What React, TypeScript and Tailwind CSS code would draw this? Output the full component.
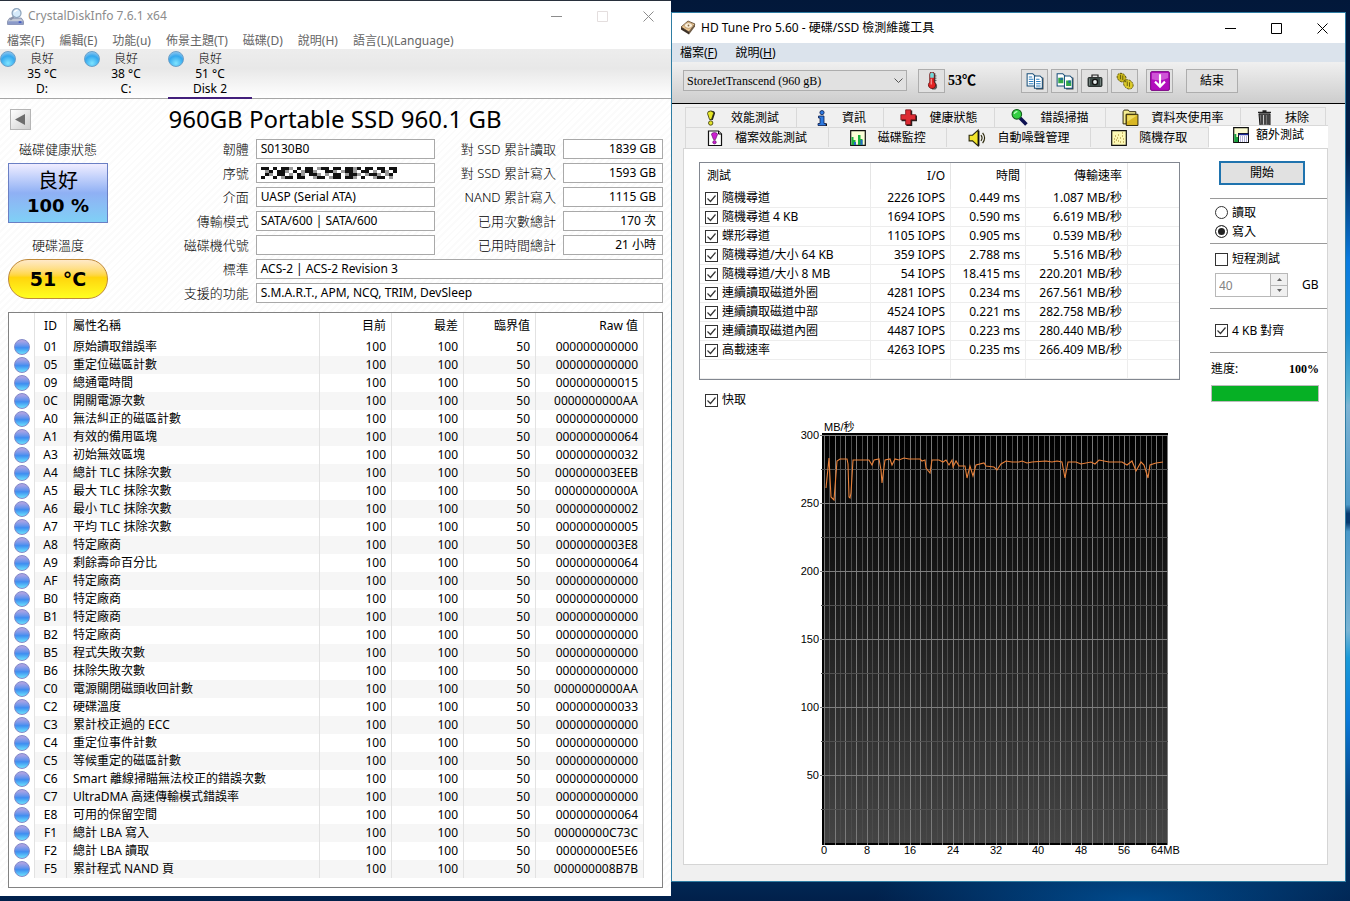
import { useState } from "react";
import type { ReactNode } from "react";

type Attribute = [id: string, name: string, limit: number, raw: string];
type TestRow = { name: string; io: string; time: string; rate: string };

const attributes: Attribute[] = [
  ["01", "原始讀取錯誤率", 50, "000000000000"],
  ["05", "重定位磁區計數", 50, "000000000000"],
  ["09", "總通電時間", 50, "000000000015"],
  ["0C", "開關電源次數", 50, "0000000000AA"],
  ["A0", "無法糾正的磁區計數", 50, "000000000000"],
  ["A1", "有效的備用區塊", 50, "000000000064"],
  ["A3", "初始無效區塊", 50, "000000000032"],
  ["A4", "總計 TLC 抹除次數", 50, "000000003EEB"],
  ["A5", "最大 TLC 抹除次數", 50, "00000000000A"],
  ["A6", "最小 TLC 抹除次數", 50, "000000000002"],
  ["A7", "平均 TLC 抹除次數", 50, "000000000005"],
  ["A8", "特定廠商", 50, "0000000003E8"],
  ["A9", "剩餘壽命百分比", 50, "000000000064"],
  ["AF", "特定廠商", 50, "000000000000"],
  ["B0", "特定廠商", 50, "000000000000"],
  ["B1", "特定廠商", 50, "000000000000"],
  ["B2", "特定廠商", 50, "000000000000"],
  ["B5", "程式失敗次數", 50, "000000000000"],
  ["B6", "抹除失敗次數", 50, "000000000000"],
  ["C0", "電源關閉磁頭收回計數", 50, "0000000000AA"],
  ["C2", "硬碟溫度", 50, "000000000033"],
  ["C3", "累計校正過的 ECC", 50, "000000000000"],
  ["C4", "重定位事件計數", 50, "000000000000"],
  ["C5", "等候重定的磁區計數", 50, "000000000000"],
  ["C6", "Smart 離線掃瞄無法校正的錯誤次數", 50, "000000000000"],
  ["C7", "UltraDMA 高速傳輸模式錯誤率", 50, "000000000000"],
  ["E8", "可用的保留空間", 50, "000000000064"],
  ["F1", "總計 LBA 寫入", 50, "00000000C73C"],
  ["F2", "總計 LBA 讀取", 50, "00000000E5E6"],
  ["F5", "累計程式 NAND 頁", 50, "000000008B7B"],
];

const tests: TestRow[] = [
  { name: "隨機尋道", io: "2226 IOPS", time: "0.449 ms", rate: "1.087 MB/秒" },
  { name: "隨機尋道 4 KB", io: "1694 IOPS", time: "0.590 ms", rate: "6.619 MB/秒" },
  { name: "蝶形尋道", io: "1105 IOPS", time: "0.905 ms", rate: "0.539 MB/秒" },
  { name: "隨機尋道/大小 64 KB", io: "359 IOPS", time: "2.788 ms", rate: "5.516 MB/秒" },
  { name: "隨機尋道/大小 8 MB", io: "54 IOPS", time: "18.415 ms", rate: "220.201 MB/秒" },
  { name: "連續讀取磁道外圈", io: "4281 IOPS", time: "0.234 ms", rate: "267.561 MB/秒" },
  { name: "連續讀取磁道中部", io: "4524 IOPS", time: "0.221 ms", rate: "282.758 MB/秒" },
  { name: "連續讀取磁道內圈", io: "4487 IOPS", time: "0.223 ms", rate: "280.440 MB/秒" },
  { name: "高載速率", io: "4263 IOPS", time: "0.235 ms", rate: "266.409 MB/秒" },
];

const disks = [
  { temp: "35 °C", name: "D:" },
  { temp: "38 °C", name: "C:" },
  { temp: "51 °C", name: "Disk 2" },
];

const infoMenus = ["檔案(F)", "編輯(E)", "功能(u)", "佈景主題(T)", "磁碟(D)", "說明(H)", "語言(L)(Language)"];

/* ---------- icons ---------- */

function Icon({ children, size = 16 }: { children: ReactNode; size?: number }) {
  return (
    <svg width={size} height={size} viewBox="0 0 16 16" className="shrink-0" aria-hidden="true">
      {children}
    </svg>
  );
}

const DiskInfoIcon = () => (
  <Icon size={17}>
    <path d="M2.500 9.500h11l2 3v3H.5v-3z" fill="#c3c9d6" stroke="#7d88a8" strokeWidth=".8" />
    <path d="M1 12.500h14v3H1z" fill="#8b9ac8" />
    <rect x="11" y="12.500" width="2.500" height="1.500" fill="#3b53c0" />
    <path d="M6.500 8 3 11" stroke="#8a93a8" strokeWidth="2" />
    <circle cx="9" cy="4.800" r="4.200" fill="#d5eafa" stroke="#8fa5bd" strokeWidth="1.200" />
    <path d="M7 4a3 3 0 0 1 3-2" stroke="#fff" strokeWidth="1.200" fill="none" />
  </Icon>
);

const DriveIcon = () => (
  <Icon>
    <path d="M1 7 8 1l7 3-6 8z" fill="#e9c48f" stroke="#54402a" strokeWidth=".8" />
    <path d="M1 7v2.500l8 5V12z" fill="#3c3026" />
    <path d="M9 12v2.500L15 6.500V4z" fill="#6d5a44" />
    <ellipse cx="8.500" cy="5.500" rx="4" ry="2.800" fill="#fbf0da" stroke="#a58053" strokeWidth=".6" />
    <circle cx="8.500" cy="5.500" r=".9" fill="#8a6b44" />
  </Icon>
);

const ThermometerIcon = () => (
  <Icon size={18}>
    <path d="M8 1h3v8l1.500 2.500V14L11 15.500H8z" fill="#222" opacity=".7" />
    <path d="M6 2a2 2 0 0 1 4 0v7a3.200 3.200 0 1 1-4 0z" fill="#e22424" stroke="#5a0d0d" strokeWidth=".7" />
    <path d="M6.400 2a1.600 1.600 0 0 1 3.200 0v3H6.400z" fill="#6fdada" />
    <path d="M7.300 6v5" stroke="#ffb0b0" strokeWidth=".9" />
    <path d="M10 3.500h2M10 5.500h2M10 7.500h2" stroke="#333" strokeWidth=".6" />
  </Icon>
);

const CopyIcon = ({ chart = false }: { chart?: boolean }) => (
  <Icon size={18}>
    <path d="M9 5h6.500v10.500H9z" fill="#333" />
    <path d="M1 1.500h5l2 2v9H1z" fill="#fff" stroke="#174e78" strokeWidth=".9" />
    <path d="M7.500 3.500h5l2 2v9h-7z" fill="#fff" stroke="#174e78" strokeWidth=".9" />
    {chart ? (
      <>
        <path d="M2 5h4.500v5H2zM9 7.500h4.500v5H9z" fill="#31a847" />
        <path d="M4 5h2v2H4zM11 7.500h2v2h-2z" fill="#2265aa" />
      </>
    ) : (
      <path d="M2.500 4.500h3M2.500 6.500h4M2.500 8.500h4M2.500 10.500h4M9 6.500h3M9 8.500h4M9 10.500h4M9 12.500h4" stroke="#2b7fc0" strokeWidth=".9" />
    )}
  </Icon>
);

const CameraIcon = () => (
  <Icon size={16}>
    <path d="M5 4V2h6v2" stroke="#222" strokeWidth="1.200" fill="none" />
    <rect x="1" y="4.500" width="14" height="9" rx="1" fill="#3c4a47" stroke="#151a19" strokeWidth=".8" />
    <path d="M2.500 5.500v7M13.500 5.500v7" stroke="#74827e" />
    <circle cx="8" cy="9" r="3.200" fill="#111" />
    <circle cx="8" cy="9" r="1.900" fill="#e8efef" />
  </Icon>
);

const CoinsIcon = () => (
  <Icon size={18}>
    <ellipse cx="5" cy="5" rx="4.300" ry="3.500" transform="rotate(40 5 5)" fill="#c9b71c" stroke="#5b5208" strokeWidth=".8" strokeDasharray="2 .8" />
    <ellipse cx="11" cy="11" rx="4.600" ry="3.700" transform="rotate(40 11 11)" fill="#dccb2c" stroke="#5b5208" strokeWidth=".8" strokeDasharray="2 .8" />
    <path d="M4 2.500v4M6 3v4M10 8.500v4M12 9v4M7 7l2 2" stroke="#6e640b" strokeWidth=".9" />
  </Icon>
);

const DownloadIcon = () => (
  <Icon size={20}>
    <rect x=".5" y=".5" width="15" height="15" rx="1" fill="#b20dbd" stroke="#7a0683" strokeWidth=".8" />
    <path d="M1.500 1.500h13v4q-6 3-13 1z" fill="#cf55d6" />
    <path d="M8 2.500V12M4 8.500l4 4 4-4" stroke="#fff" strokeWidth="1.700" fill="none" />
  </Icon>
);

const ExclaimIcon = () => (
  <Icon>
    <path d="M5 3.500Q5 .8 8.500.8T12 3.500L9.800 10H7.200z" fill="#222" />
    <path d="M4.500 3.500Q4.500 1 7.500 1t3 2.500L8.500 9.500h-2z" fill="#e5e529" stroke="#33330a" strokeWidth=".8" />
    <circle cx="7.700" cy="13" r="2.200" fill="#e5e529" stroke="#33330a" strokeWidth=".8" />
  </Icon>
);

const InfoIcon = () => (
  <Icon>
    <circle cx="8" cy="2.600" r="2.100" fill="#2d7ae0" stroke="#0b1c4d" strokeWidth=".8" />
    <path d="M4.500 6h5.500v7.500h2V15.500h-8V13.500h2V8H4.500z" fill="#2d7ae0" stroke="#0b1c4d" strokeWidth=".8" />
    <path d="M12.500 13.500v2.500" stroke="#111" />
  </Icon>
);

const CrossIcon = () => (
  <Icon size={17}>
    <path d="M6 1.500h5.500V6H16v5.500h-4.500V16H6v-4.500H1.500V6H6z" fill="#222" />
    <path d="M5.300.8h4.900v4.500h4.500v4.900h-4.500v4.500H5.300v-4.500H.8V5.300h4.500z" fill="#dd2b33" stroke="#6d0e12" strokeWidth=".7" />
  </Icon>
);

const SearchIcon = () => (
  <Icon size={17}>
    <path d="m8.500 8.500 6 6" stroke="#0d1152" strokeWidth="3.400" />
    <circle cx="5.500" cy="5" r="4.500" fill="#34cf42" stroke="#115c1a" strokeWidth="1" />
    <path d="M3 4.500a3 3 0 0 1 3-2" stroke="#c9ffce" strokeWidth="1.200" fill="none" />
  </Icon>
);

const FolderIcon = () => (
  <Icon size={17}>
    <path d="M1 2.500 2 1h4l1 1.500h6V5H4v9H1z" fill="#f4ec8f" stroke="#2a2408" strokeWidth=".9" />
    <path d="M4 5h11v10.500H4z" fill="#d9b724" stroke="#2a2408" strokeWidth=".9" />
    <path d="M5 6h9l-9 6z" fill="#eedb64" />
  </Icon>
);

const TrashIcon = () => (
  <Icon>
    <path d="M1 2.500h13M5.500 1h4" stroke="#222" strokeWidth="1.500" />
    <path d="M2 4h11v11.500H3z" fill="#777" stroke="#111" />
    <path d="M5 5v9.500M8 5v9.500M11 5v9.500" stroke="#1d1d1d" strokeWidth="1.100" />
    <path d="M6.500 5v9.500" stroke="#ddd" strokeWidth=".8" />
  </Icon>
);

const FileTestIcon = () => (
  <Icon>
    <path d="M1.500 1h10l3 3v11.500h-13z" fill="#fff" stroke="#111" strokeWidth="1.200" />
    <path d="M11.500 1v3h3" fill="#bbb" stroke="#111" />
    <path d="M4.500 4.500Q4.500 2.500 7.500 2.500t3 2L8.500 9.500h-2z" fill="#cb1fd0" stroke="#51085a" strokeWidth=".6" />
    <circle cx="7.500" cy="12.200" r="1.700" fill="#cb1fd0" stroke="#51085a" strokeWidth=".6" />
  </Icon>
);

const MonitorIcon = () => (
  <Icon>
    <path d="M.7.700h14.600v14.600H.7z" fill="#fbffd8" stroke="#111" strokeWidth="1.200" />
    <path d="M1.500 15V7h2v3h2v5zM8 15V5h2.500v4h2v6z" fill="#18b03d" />
    <path d="M4 15v-3h2v3zM10.500 15v-5h2v5z" fill="#2868c8" />
  </Icon>
);

const SpeakerIcon = () => (
  <Icon size={18}>
    <path d="M1 5.500h3L9 1v14l-5-4.500H1z" fill="#f1e42a" stroke="#2b280a" strokeWidth="1" />
    <path d="M9.500 1.500v13.500" stroke="#111" strokeWidth="1.300" />
    <path d="M11.500 5.500q2 2.500 0 5M13 3.500q3.500 4.500 0 9" stroke="#2b280a" fill="none" />
  </Icon>
);

const ScatterIcon = () => (
  <Icon>
    <path d="M.7.700h14.600v14.600H.7z" fill="#fdf9b4" stroke="#111" strokeWidth="1.200" />
    <path d="M3 12h1M5 10h1M7 11h1M9 8h1M11 6h1M12 9h1M4 6h1M7 5h1M9 12h1M12 12h1M6 8h1M11 3h1M3 9h1" stroke="#9c7a26" strokeWidth="1.100" />
  </Icon>
);

const ExtraIcon = () => (
  <Icon>
    <path d="M.7.700h14.600v14.600H.7z" fill="#fbfbd0" stroke="#111" strokeWidth="1.200" />
    <path d="M1.300 15V7h2v3h2v5z" fill="#18a03d" />
    <rect x="5.500" y="6.500" width="10" height="9" fill="#fff" stroke="#111" />
    <path d="M5.500 7.500h10" stroke="#1c2b9a" strokeWidth="1.500" />
    <path d="M7 10h7M7 12h7M7 14h7" stroke="#6464b4" strokeWidth="1" strokeDasharray="1 1" />
  </Icon>
);

/* ---------- shared bits ---------- */

function WindowButtons({ tone, boxTone }: { tone: string; boxTone: string }) {
  return (
    <div className="ml-auto flex">
      <button aria-label="最小化" className={`grid h-[30px] w-[46px] place-items-center ${tone}`}>
        <svg width="11" height="11" fill="none" stroke="currentColor"><path d="M0 5.500h11" /></svg>
      </button>
      <button aria-label="最大化" className={`grid h-[30px] w-[46px] place-items-center ${boxTone}`}>
        <svg width="11" height="11" fill="none" stroke="currentColor"><path d="M.5.500h10v10H.5z" /></svg>
      </button>
      <button aria-label="關閉" className={`grid h-[30px] w-[46px] place-items-center ${tone}`}>
        <svg width="11" height="11" fill="none" stroke="currentColor"><path d="m.5.500 10 10M10.500.500l-10 10" /></svg>
      </button>
    </div>
  );
}

function Check({ label, on = false }: { label: string; on?: boolean }) {
  const [checked, setChecked] = useState(on);
  return (
    <label className="flex items-center gap-1">
      <span className="grid">
        <input
          type="checkbox"
          checked={checked}
          onChange={(e) => setChecked(e.target.checked)}
          className="h-[13px] w-[13px] appearance-none border border-[#333] bg-white [grid-area:1/1]"
        />
        {checked && (
          <svg width="13" height="13" className="pointer-events-none [grid-area:1/1]" fill="none" stroke="#333" strokeWidth="1.200">
            <path d="m2.500 6.500 3 3 5-6" />
          </svg>
        )}
      </span>
      {label}
    </label>
  );
}

/* ---------- CrystalDiskInfo ---------- */

// Unreadable serial number, one digit per grey block
const serialBlocks = [
  "9909099509099059909909959099099099",
  "0590995090599500995059950990509509",
  "0950990509509950509905995059950590",
  "9009059909900599059909950900599050",
];
const greys = ["#ffffff", "#9a9a9a", "#111111"];

function SerialMosaic() {
  return (
    <svg width="136" height="12" role="img" aria-label="序號已遮蔽" shapeRendering="crispEdges">
      {serialBlocks.map((line, y) =>
        line.split("").map((c, x) => (
          <rect key={`${x}-${y}`} x={x * 4} y={y * 3} width="4" height="3" fill={greys[c === "9" ? 2 : c === "5" ? 1 : 0]} />
        ))
      )}
    </svg>
  );
}

function FieldLabel({ children }: { children: ReactNode }) {
  return <span className="pr-[7px] text-right text-[13px] leading-5 font-light whitespace-nowrap">{children}</span>;
}

function Field({ children, wide = false, right = false }: { children?: ReactNode; wide?: boolean; right?: boolean }) {
  return (
    <span
      className={`flex h-5 items-center border border-[#a9a9a9] bg-white text-xs ${right ? "justify-end pr-[6px]" : "pl-1"} ${wide ? "col-span-3" : ""}`}
    >
      {children}
    </span>
  );
}

function DiskInfoWindow() {
  const [disk, setDisk] = useState(2);
  return (
    <section className="min-w-0 flex-[672] border-t border-[#28303c] bg-white pb-2 font-['Noto_Sans','Noto_Sans_CJK_TC',sans-serif] text-xs text-black">
      <header className="flex h-[30px] items-center pl-[7px] text-[#8c8c8c]">
        <DiskInfoIcon />
        <h1 className="ml-1">CrystalDiskInfo 7.6.1 x64</h1>
        <WindowButtons tone="text-[#8c8c8c]" boxTone="text-[#e4dede]" />
      </header>
      <nav className="flex h-[18px] items-center gap-[15px] pt-[2px] pl-[7px] text-[#666]">
        {infoMenus.map((m) => (
          <button key={m} className="whitespace-nowrap">{m}</button>
        ))}
      </nav>
      <div className="flex h-[50px] border-b border-[#a6a6a6] bg-linear-to-b from-[#ededed] via-[#e8e8e8] via-40% to-white">
        {disks.map((d, i) => (
          <button
            key={d.name}
            onClick={() => setDisk(i)}
            className={`flex h-[50px] w-[84px] pt-[2px] leading-[15px] ${i === disk ? "border-b-2 border-[#43207c]" : ""}`}
          >
            <span className="h-4 w-4 rounded-full border border-[#6a9fc8] bg-[radial-gradient(circle_at_50%_80%,#7fe4ff,#35a8ee_55%,#b8d4f0)]" />
            <span className="flex-1 pr-4 whitespace-nowrap">
              <span className="block font-light">良好</span>
              <span className="block">{d.temp}</span>
              <span className="block">{d.name}</span>
            </span>
          </button>
        ))}
      </div>

      <div className="bg-[repeating-linear-gradient(135deg,#ffffff_0_3px,#fbfbfb_3px_5px)] px-2">
        <div className="flex h-10 items-center">
          <button aria-label="上一個磁碟" className="ml-[2px] grid h-[21px] w-[21px] place-items-center border border-[#b5b5b5] bg-linear-to-br from-white to-[#cfcfcf]">
            <svg width="11" height="11"><path d="M0 5.500 10 0v11z" fill="#6e6e6e" /></svg>
          </button>
          <h2 className="flex-1 pr-6 text-center text-2xl leading-8">960GB Portable SSD 960.1 GB</h2>
        </div>

        <div className="grid grid-cols-[100px_148fr_180fr_128fr_100px] gap-y-1 pb-[9px]">
          <div className="row-span-7 flex flex-col items-center text-[13px] leading-5 font-light">
            <span>磁碟健康狀態</span>
            <div className="mt-1 flex h-[60px] w-full flex-col items-center justify-center border border-[#6a7fc4] bg-linear-to-b from-[#f0edff] via-[#8fb0f4] via-50% to-[#7fd0f6]">
              <span className="text-xl leading-[26px] font-normal">良好</span>
              <b className="font-['DejaVu_Sans',sans-serif] text-lg leading-6 font-bold">100 %</b>
            </div>
            <span className="mt-3">硬碟溫度</span>
            <div className="mt-1 grid h-10 w-full place-items-center rounded-full border border-[#c08a3a] bg-linear-to-b from-[#ffe9c8] via-[#ffd40c] via-45% to-[#ffff20]">
              <b className="font-['DejaVu_Sans',sans-serif] text-[19px] leading-6 font-bold">51 °C</b>
            </div>
          </div>
          <FieldLabel>韌體</FieldLabel>
          <Field>S0130B0</Field>
          <FieldLabel>對 SSD 累計讀取</FieldLabel>
          <Field right>1839 GB</Field>
          <FieldLabel>序號</FieldLabel>
          <Field><SerialMosaic /></Field>
          <FieldLabel>對 SSD 累計寫入</FieldLabel>
          <Field right>1593 GB</Field>
          <FieldLabel>介面</FieldLabel>
          <Field>UASP (Serial ATA)</Field>
          <FieldLabel>NAND 累計寫入</FieldLabel>
          <Field right>1115 GB</Field>
          <FieldLabel>傳輸模式</FieldLabel>
          <Field>SATA/600 | SATA/600</Field>
          <FieldLabel>已用次數總計</FieldLabel>
          <Field right>170 次</Field>
          <FieldLabel>磁碟機代號</FieldLabel>
          <Field />
          <FieldLabel>已用時間總計</FieldLabel>
          <Field right>21 小時</Field>
          <FieldLabel>標準</FieldLabel>
          <Field wide>ACS-2 | ACS-2 Revision 3</Field>
          <FieldLabel>支援的功能</FieldLabel>
          <Field wide>S.M.A.R.T., APM, NCQ, TRIM, DevSleep</Field>
        </div>

        <div className="border border-[#828282] bg-white pb-[9px]">
          <table className="w-full table-fixed border-separate border-spacing-0 leading-[18px] whitespace-nowrap">
            <colgroup>
              <col className="w-[26px]" />
              <col className="w-8" />
              <col />
              <col className="w-[72px]" />
              <col className="w-[72px]" />
              <col className="w-[72px]" />
              <col className="w-[108px]" />
              <col className="w-[18px]" />
            </colgroup>
            <thead>
              <tr className="h-[25px] [&>th]:border-r [&>th]:border-[#e2e2e2] [&>th]:p-0 [&>th]:font-normal">
                <th />
                <th>ID</th>
                <th className="text-left"><span className="pl-[6px]">屬性名稱</span></th>
                <th className="text-right"><span className="pr-[5px]">目前</span></th>
                <th className="text-right"><span className="pr-[5px]">最差</span></th>
                <th className="text-right"><span className="pr-[5px]">臨界值</span></th>
                <th className="text-right"><span className="pr-[5px]">Raw 值</span></th>
                <td />
              </tr>
            </thead>
            <tbody>
              {attributes.map(([id, name, limit, raw], i) => (
                <tr
                  key={id}
                  className={`h-[18px] [&>td]:border-r [&>td]:border-[#e2e2e2] [&>td:last-child]:border-r-0 ${i % 2 ? "[&>td:nth-child(n+2):nth-child(-n+7)]:bg-[#f6f6f6]" : ""}`}
                >
                  <td className="p-0 pl-[5px]">
                    <span className="block h-4 w-4 rounded-full border border-[#8288c8] bg-linear-to-b from-[#b7a5e2] via-[#3f8df0] via-55% to-[#6fe0fb]" />
                  </td>
                  <td className="p-0 text-center">{id}</td>
                  <td className="p-0 pl-[6px]">{name}</td>
                  <td className="p-0 pr-[5px] text-right">100</td>
                  <td className="p-0 pr-[5px] text-right">100</td>
                  <td className="p-0 pr-[5px] text-right">{limit}</td>
                  <td className="p-0 pr-[5px] text-right">{raw}</td>
                  <td className="p-0" />
                </tr>
              ))}
            </tbody>
          </table>
        </div>
      </div>
    </section>
  );
}

/* ---------- HD Tune ---------- */

const tabsBack: [ReactNode, string][] = [
  [<ExclaimIcon />, "效能測試"],
  [<InfoIcon />, "資訊"],
  [<CrossIcon />, "健康狀態"],
  [<SearchIcon />, "錯誤掃描"],
  [<FolderIcon />, "資料夾使用率"],
  [<TrashIcon />, "抹除"],
];

const tabsFront: [ReactNode, string][] = [
  [<FileTestIcon />, "檔案效能測試"],
  [<MonitorIcon />, "磁碟監控"],
  [<SpeakerIcon />, "自動噪聲管理"],
  [<ScatterIcon />, "隨機存取"],
];

const speedLine =
  "37,73 40,43 42,82 45,85 48,46 51,44 58,44 59,49 60,82 61,83 62,78 64,45 67,45 77,45 80,45 83,50 85,45 90,44 92,55 93,68 " +
  "96,45 101,44 103,50 106,44 110,45 115,43 120,44 131,44 133,46 136,45 137,53 141,58 143,45 150,45 154,47 157,45 160,50 163,45 " +
  "164,52 167,46 170,51 176,51 178,63 181,51 184,61 187,50 195,48 197,51 205,52 208,55 212,49 217,46 223,47 230,47 233,46 238,48 " +
  "243,47 257,46 263,47 268,46 273,47 276,63 279,47 287,47 292,49 302,47 306,49 310,45 320,47 333,47 338,50 343,46 347,56 " +
  "352,47 355,50 359,63 361,50 367,48 374,47";

const chartX = (mb: number) => 35 + Math.round((mb * 343) / 64);
const chartY = (speed: number) => 428 - Math.round((speed * 408) / 300);

function SpeedChart() {
  const megabytes = Array.from({ length: 65 }, (_, i) => i);
  return (
    <svg width="404" height="442" className="font-['Liberation_Sans','Noto_Sans_CJK_TC',sans-serif] text-[11px]" role="img" aria-label="MB/秒">
      <defs>
        <linearGradient id="plot" x1="0" y1="0" x2="0" y2="1">
          <stop offset="0" stopColor="#000" />
          <stop offset="1" stopColor="#444" />
        </linearGradient>
      </defs>
      <text x="35" y="16">MB/秒</text>
      <rect x="33" y="18" width="346" height="412" fill="#000" />
      <rect x="35" y="20" width="343" height="408" fill="url(#plot)" />
      <g shapeRendering="crispEdges">
        {megabytes.map((mb) => (
          <path key={mb} d={`M${chartX(mb)} 20V${mb % 2 ? 428 : 430}`} stroke={mb % 2 ? "#4c4c4c" : "#7a7a7a"} />
        ))}
        {[25, 75, 125, 175, 225, 275].map((s) => (
          <path key={s} d={`M32 ${chartY(s)}H379`} stroke="#505050" />
        ))}
        {[50, 100, 150, 200, 250, 300].map((s) => (
          <path key={s} d={`M31 ${chartY(s)}H379`} stroke="#7e7e7e" />
        ))}
      </g>
      {[50, 100, 150, 200, 250, 300].map((s) => (
        <text key={s} x="30" y={chartY(s) + 4} textAnchor="end">{s}</text>
      ))}
      {[0, 8, 16, 24, 32, 40, 48, 56].map((mb) => (
        <text key={mb} x={chartX(mb)} y="439" textAnchor="middle">{mb}</text>
      ))}
      <text x="362" y="439">64MB</text>
      <polyline points={speedLine} fill="none" stroke="#e8813a" strokeWidth="1.100" />
    </svg>
  );
}

function ToolButton({ label, children }: { label: string; children: ReactNode }) {
  return (
    <button aria-label={label} className="grid h-6 w-[27px] place-items-center border border-[#adadad] bg-[#e1e1e1]">
      {children}
    </button>
  );
}

function Tab({ icon, label }: { icon: ReactNode; label: string }) {
  return (
    <button className="flex h-5 items-center justify-center gap-3 border-t border-r border-[#d9d9d9] whitespace-nowrap">
      {icon}
      {label}
    </button>
  );
}

function HdTuneWindow() {
  const [mode, setMode] = useState("write");
  return (
    <section className="mt-3 mr-1 min-w-0 flex-[674] border border-[#2f7da3] bg-[#f0f0f0] font-['Noto_Sans','Noto_Sans_CJK_TC',sans-serif] text-xs text-black">
      <header className="flex h-[30px] items-center bg-white pl-2">
        <DriveIcon />
        <h1 className="ml-[5px]">HD Tune Pro 5.60 - 硬碟/SSD 檢測維護工具</h1>
        <WindowButtons tone="text-black" boxTone="text-black" />
      </header>
      <nav className="flex h-[19px] items-center gap-[18px] bg-[#dbe3ec] pl-2">
        <button>檔案(<u>F</u>)</button>
        <button>說明(<u>H</u>)</button>
      </nav>
      <div className="flex h-[42px] items-center border-b border-black bg-linear-to-b from-[#f0f0f0] to-[#cdcdcd] pb-1 pl-[11px]">
        <div className="grid w-[224px] items-center">
          <select aria-label="磁碟" className="h-[21px] w-full appearance-none border border-[#adadad] bg-[#e1e1e1] pl-[3px] font-['Liberation_Serif',serif] [grid-area:1/1]">
            <option>StoreJetTranscend (960 gB)</option>
          </select>
          <svg width="9" height="6" className="pointer-events-none mr-1 justify-self-end [grid-area:1/1]" fill="none" stroke="#555">
            <path d="m.5.500 4 4 4-4" />
          </svg>
        </div>
        <div className="ml-[11px] flex items-center gap-[3px]">
          <ToolButton label="溫度"><ThermometerIcon /></ToolButton>
          <b className="w-[70px] font-['Liberation_Serif','Noto_Sans_CJK_TC',serif] text-sm">53℃</b>
        </div>
        <div className="ml-[3px] flex gap-[3px]">
          <ToolButton label="複製文字"><CopyIcon /></ToolButton>
          <ToolButton label="複製圖片"><CopyIcon chart /></ToolButton>
          <ToolButton label="擷取畫面"><CameraIcon /></ToolButton>
          <ToolButton label="註冊"><CoinsIcon /></ToolButton>
        </div>
        <div className="ml-2 flex gap-[13px]">
          <ToolButton label="下載"><DownloadIcon /></ToolButton>
          <button className="h-6 w-[52px] border border-[#adadad] bg-[#e1e1e1]">結束</button>
        </div>
      </div>

      <div className="px-[11px] pt-[3px] pb-4">
        <div className="mr-2 ml-[2px] grid grid-cols-[111fr_87fr_111fr_111fr_135fr_85fr] border-l border-[#d9d9d9]">
          {tabsBack.map(([icon, label]) => (
            <Tab key={label} icon={icon} label={label} />
          ))}
        </div>
        <div className="mr-[6px] ml-[2px] grid grid-cols-[143fr_118fr_143fr_118fr_119fr] border-l border-[#d9d9d9]">
          {tabsFront.map(([icon, label]) => (
            <Tab key={label} icon={icon} label={label} />
          ))}
          <button className="-mt-[2px] flex h-[23px] items-center justify-center gap-[7px] border-t border-[#d9d9d9] bg-white pb-1 whitespace-nowrap">
            <ExtraIcon />
            額外測試
          </button>
        </div>

        <div className="mr-[6px] flex justify-between border border-[#d5d5d5] bg-white pl-[15px]">
          <div className="w-[481px] pt-[13px]">
            <div className="border border-[#828790]">
              <table className="w-full table-fixed border-separate border-spacing-0 leading-[18px] whitespace-nowrap">
                <colgroup>
                  <col className="w-[171px]" />
                  <col className="w-20" />
                  <col className="w-[75px]" />
                  <col className="w-[102px]" />
                  <col />
                </colgroup>
                <thead>
                  <tr className="h-[26px] [&>th]:border-r [&>th]:border-[#e5e5e5] [&>th]:p-0 [&>th]:font-normal">
                    <th className="text-left"><span className="pl-[7px]">測試</span></th>
                    <th className="text-right"><span className="pr-[5px]">I/O</span></th>
                    <th className="text-right"><span className="pr-[5px]">時間</span></th>
                    <th className="text-right"><span className="pr-[5px]">傳輸速率</span></th>
                    <td />
                  </tr>
                </thead>
                <tbody className="[&_td]:border-r [&_td]:border-b [&_td]:border-[#ededed] [&_td:last-child]:border-r-0">
                  {tests.map((t) => (
                    <tr key={t.name} className="h-[19px]">
                      <td className="p-0 pl-[5px]"><Check label={t.name} on /></td>
                      <td className="p-0 pr-[5px] text-right">{t.io}</td>
                      <td className="p-0 pr-[5px] text-right">{t.time}</td>
                      <td className="p-0 pr-[5px] text-right">{t.rate}</td>
                      <td className="p-0" />
                    </tr>
                  ))}
                  <tr className="h-[19px]">
                    <td className="p-0" />
                    <td className="p-0" />
                    <td className="p-0" />
                    <td className="p-0" />
                    <td className="p-0" />
                  </tr>
                </tbody>
              </table>
            </div>
            <div className="mt-3 pl-[6px]">
              <Check label="快取" on />
            </div>
            <div className="pt-[7px] pb-[7px] pl-[90px]">
              <SpeedChart />
            </div>
          </div>

          <div className="w-[117px] pt-3">
            <button className="ml-[9px] h-6 w-[86px] border-2 border-[#1f73ae] bg-[#e1e1e1]">開始</button>
            <fieldset className="mt-[13px] h-[45px] border-t border-[#9a9a9a] pt-1 pl-[5px]">
              {[["read", "讀取"], ["write", "寫入"]].map(([value, label]) => (
                <label key={value} className="flex h-[19px] items-center gap-1">
                  <input
                    type="radio"
                    name="mode"
                    checked={mode === value}
                    onChange={() => setMode(value)}
                    className="h-[13px] w-[13px] appearance-none rounded-full border border-[#333] checked:bg-[#222] checked:shadow-[inset_0_0_0_2px_white]"
                  />
                  {label}
                </label>
              ))}
            </fieldset>
            <div className="h-[65px] border-t border-[#9a9a9a] pt-[7px] pl-[5px]">
              <Check label="短程測試" />
              <div className="mt-[6px] flex items-center">
                <input aria-label="容量" disabled defaultValue="40" className="h-6 w-[55px] border border-r-0 border-[#b8b8b8] bg-white pl-[3px] text-[#838383]" />
                <span className="grid h-6 w-[18px] border border-[#b8b8b8] bg-[#f0f0f0]">
                  <button aria-label="增加" disabled className="grid place-items-center border-b border-[#b8b8b8]">
                    <svg width="5" height="3"><path d="M0 3 2.500 0 5 3z" fill="#666" /></svg>
                  </button>
                  <button aria-label="減少" disabled className="grid place-items-center">
                    <svg width="5" height="3"><path d="M0 0h5L2.500 3z" fill="#666" /></svg>
                  </button>
                </span>
                <span className="ml-[14px]">GB</span>
              </div>
            </div>
            <div className="flex h-11 items-center border-t border-[#9a9a9a] pl-[5px]">
              <Check label="4 KB 對齊" on />
            </div>
            <div className="border-t border-[#9a9a9a] pt-[6px] pr-2 pl-[1px]">
              <div className="flex justify-between leading-5">
                <span>進度:</span>
                <b className="font-['Liberation_Serif',serif]">100%</b>
              </div>
              <div role="progressbar" aria-valuenow={100} className="mt-[6px] h-[17px] border border-[#bcbcbc] bg-[#06b025]" />
            </div>
          </div>
        </div>
      </div>
    </section>
  );
}

export default function App() {
  return (
    <main className="flex min-h-screen items-start bg-[radial-gradient(ellipse_260px_60px_at_84%_100%,#004a8c,transparent),linear-gradient(180deg,#02183a_0%,#02204a_17%,#0a7be0_29%,#1a8cd0_37%,#5fb4d0_44%,#7fb4d4_45%,#4f9ac8_56%,#083a70_57%,#083a70_58%,#4a98c8_59%,#7ab4d4_70%,#1a9ad8_73%,#0a78d8_80%,#04407c_89%,#012a58_97%,#01204a_100%)]">
      <DiskInfoWindow />
      <HdTuneWindow />
    </main>
  );
}
